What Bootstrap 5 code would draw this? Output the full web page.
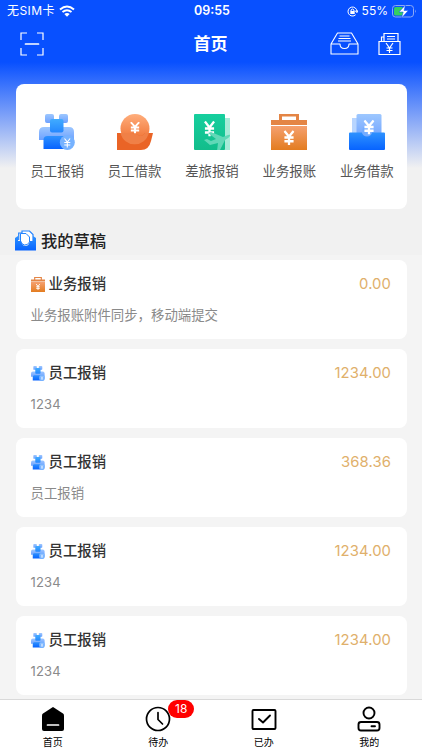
<!DOCTYPE html>
<html lang="zh-CN">
<head>
<meta charset="utf-8">
<meta name="viewport" content="width=device-width, initial-scale=1">
<title>首页</title>
<link href="https://cdn.jsdelivr.net/npm/bootstrap@5.3.0/dist/css/bootstrap.min.css" rel="stylesheet">
<style>
body{font-family:Inter,"Noto Sans CJK SC",sans-serif;background:#f4f4f4;color:#333}
svg{display:block;flex:none}
.screen{height:750px}
.hero{height:255px;background:linear-gradient(#0850ff 0,#0850ff 62px,#f1f1f1 168px)}
.status{height:20px;font-size:12px;line-height:20px;padding:2px 5px 0 7px}
.carrier{letter-spacing:.45px}
.side{width:150px}
.clock{font-size:12.5px;font-weight:600}
.topbar{height:44px;padding:3px 21px 0 20px}
.topbar h1{font-size:17px;line-height:24px}
.nav-side{width:71px}
.nav-actions{gap:19px}
.panel{margin:19.5px 15.5px 0;height:125.5px;border-radius:8px;padding:30px 1px 0 3px}
.app-label{font-size:13.4px;line-height:20px;color:#555;margin-top:11px}
.drafts-title{height:46px;padding:17px 15px 0;gap:5px}
.drafts-title h2{font-size:16.3px;line-height:24px;font-weight:500;color:#222}
.drafts{padding:5px 15.5px 0;gap:10px}
.draft{height:79px;flex:none;border-radius:8px;padding:14px 15.5px 0 15px}
.draft-name{font-size:14.4px;line-height:20px;font-weight:500;color:#333}
.amount{font-size:14.8px;line-height:20px;color:#dfb06b;letter-spacing:.1px}
.note{font-size:13.4px;line-height:20px;color:#8a8a8a;margin-top:11px}
.note-number{font-size:13px;letter-spacing:.2px}
.tabs{height:51px;border-top:1px solid #d9d9d9;padding-top:6px}
.tab-label{font-size:10px;line-height:14px;margin-top:3px;font-weight:400}
.count{left:23px;top:-6px;width:26px;height:18px;line-height:18px;font-size:12px;background:#f00}
</style>
<script src="https://cdn.jsdelivr.net/npm/bootstrap@5.3.0/dist/js/bootstrap.bundle.min.js"></script>
</head>
<body>
<svg width="0" height="0" class="position-absolute" aria-hidden="true">
<defs>
<linearGradient id="sky" x2="0" y2="1"><stop stop-color="#41acff"/><stop offset="1" stop-color="#2487ff"/></linearGradient>
<linearGradient id="blue" x2="0" y2="1"><stop stop-color="#2e92ff"/><stop offset="1" stop-color="#0763ff"/></linearGradient>
<linearGradient id="pale" x2="0" y2="1"><stop stop-color="#9dc7ff"/><stop offset="1" stop-color="#6da1ff"/></linearGradient>
<linearGradient id="coin" x2="0" y2="1"><stop stop-color="#ffae7c"/><stop offset="1" stop-color="#ee6c2c"/></linearGradient>
<linearGradient id="bag" x2="0" y2="1"><stop stop-color="#f5a06f"/><stop offset="1" stop-color="#e37c20"/></linearGradient>
<linearGradient id="green" x2="0" y2="1"><stop stop-color="#16cf9e"/><stop offset="1" stop-color="#12bd8b"/></linearGradient>
<symbol id="yen" viewBox="0 0 12 16" preserveAspectRatio="none"><path d="M1 1l5 6 5-6M6 6v10M1 8h10M1 12h10" fill="none" stroke="currentColor" stroke-width="2.500"/></symbol>
<symbol id="staff" viewBox="0 0 36 36">
<rect x="6" y="0" width="9" height="9" rx="2" fill="url(#pale)"/><rect x="20" y="0" width="9" height="9" rx="2" fill="url(#pale)"/>
<path d="M0 26V18q0-5 5-5h25q5 0 5 5v8z" fill="url(#pale)"/>
<rect x="11" y="5" width="13.500" height="13.500" rx="2" fill="url(#sky)"/>
<path d="M4.500 35V26q0-4 4-4H30v13z" fill="url(#blue)"/>
<circle cx="28.300" cy="28.500" r="7.500" fill="#76b2ff"/>
<path d="M25.500 24.500l2.800 3.500 2.800-3.500M28.300 28v5.500M25.300 28.500h6M25.300 31h6" fill="none" stroke="currentColor" stroke-width="1.100"/></symbol>
<symbol id="business" viewBox="0 0 36 36"><path d="M8 6V0h20v6h8v5H0V6zm3 0h14V2.500H11z" fill="#e48545" fill-rule="evenodd"/><path d="M0 12h36v24H0z" fill="url(#bag)"/><use href="#yen" x="12.500" y="16" width="11" height="15"/></symbol>
</defs></svg>

<main class="screen d-flex flex-column overflow-hidden">
<header class="hero flex-shrink-0 text-white">
  <div class="status d-flex justify-content-between align-items-center">
    <div class="side d-flex align-items-center"><span class="carrier me-1">无SIM卡</span>
      <svg width="16" height="12" viewBox="0 0 16 12" fill="none" stroke="#fff" stroke-width="2"><path d="M1 4.500q7-6 14 0M3.500 7q4.500-3.500 9 0"/><path d="M5.300 9q2.700-2 5.400 0L8 11.700z" fill="#fff" stroke="none"/></svg></div>
    <span class="clock">09:55</span>
    <div class="side d-flex align-items-center justify-content-end">
      <svg class="me-1" width="11" height="11" viewBox="0 0 11 11" fill="none" stroke="#fff"><path d="M8.700 8.700A4.500 4.500 0 1 1 10 5.500M8.500 5h2.500L9.900 6.700z"/><path d="M4 5V4q1.500-2 3 0v1"/><path d="M3.300 5h4.400v3H3.300z" fill="#fff" stroke="none"/></svg>
      <span>55%</span>
      <svg class="ms-1" width="25" height="13" viewBox="0 0 25 13"><rect x=".5" y=".5" width="21" height="11.500" rx="3" fill="none" stroke="#8ba8f5"/><rect x="2" y="2" width="9" height="8.500" rx="1.500" fill="#35cf60"/><path d="M23 4.500q1.800 1.800 0 3.600z" fill="#8ba8f5"/><path d="M13.500 0L7 7h4.200L9.500 13l6.800-7.500H12z" fill="#fff" stroke="#0850ff" stroke-width=".5"/></svg>
    </div>
  </div>
  <nav class="topbar d-flex justify-content-between align-items-center">
    <div class="nav-side"><svg width="24" height="24" viewBox="0 0 24 24" fill="none" stroke="#fff"><path d="M1 8V1h6M17 1h6v7M1 16v7h6M17 23h6v-7" stroke-width="1.200"/><path d="M5.500 12h13" stroke-width="1.700" stroke-linecap="round"/></svg></div>
    <h1 class="m-0 fw-bold">首页</h1>
    <div class="nav-actions d-flex justify-content-end">
      <svg width="29" height="24" viewBox="0 0 29 24" fill="none" stroke="#fff" stroke-width="1.100" stroke-linejoin="round"><path d="M1 12L7.500 1h14L28 12v10H1zM1 12h9q0 4.500 4.500 4.500T19 12h9M9.500 4h10M8.500 6.500h12M8 9h13"/></svg>
      <svg width="23" height="24" viewBox="0 0 23 24" fill="none" stroke="#fff" stroke-width="1.200"><path d="M1 9.500h21v13H1zM3.500 9.500V5H6M6 9.500V1.500h14v8M9 4.500h8M9 7h8"/><path d="M8 11l3.500 5 3.500-5M11.500 15.500V21M8.500 16h6M8.500 18.500h6"/></svg>
    </div>
  </nav>
  <section class="panel bg-white">
    <div class="row g-0 row-cols-5 text-center">
      <div class="col d-flex flex-column align-items-center text-white"><svg width="36" height="36"><use href="#staff"/></svg><span class="app-label">员工报销</span></div>
      <div class="col d-flex flex-column align-items-center text-white"><svg width="36" height="36" viewBox="0 0 36 36"><circle cx="18" cy="14.500" r="14.500" fill="url(#coin)"/><path d="M0 19h14q5 0 7 2 3 2 5 0l2-2h8l-2 8q-2 9-10 9H0z" fill="#ea6426"/><path d="M3.500 19H14q5 0 7 2 3 2 5 0l2-2h3.800A14.500 14.500 0 0 1 3.500 19z" fill="#f08047"/><use href="#yen" x="13" y="7.500" width="10" height="12"/></svg><span class="app-label">员工借款</span></div>
      <div class="col d-flex flex-column align-items-center text-white"><svg width="36" height="36" viewBox="0 0 36 36"><path d="M28 4h8v32H16z" fill="#a6ebd8"/><rect width="31" height="36" rx="1" fill="url(#green)"/><use href="#yen" x="10" y="6.500" width="11" height="16"/><path d="M10 25l3-1 4 2 5-2-8-6 3-1 12 5 5-2q3-1 2 1-1 2-5 4l-5 10-3 1 1-8-8 2z" fill="#61d8b7" transform="translate(0 1)"/></svg><span class="app-label">差旅报销</span></div>
      <div class="col d-flex flex-column align-items-center text-white"><svg width="36" height="36"><use href="#business"/></svg><span class="app-label">业务报账</span></div>
      <div class="col d-flex flex-column align-items-center text-white"><svg width="36" height="36" viewBox="0 0 36 36"><path d="M3 4h18v20H3z" fill="#b8d5ff"/><rect x="7.500" width="25" height="26" rx="1.500" fill="url(#pale)"/><path d="M1 18.500h12q1 4 5 4t5-4h12q1 0 1 1V35q0 1-1 1H1q-1 0-1-1V19.500q0-1 1-1z" fill="url(#blue)"/><circle cx="18" cy="17" r="5" fill="#75adff"/><use href="#yen" x="14.500" y="5.500" width="11" height="15"/></svg><span class="app-label">业务借款</span></div>
    </div>
  </section>
  <div class="drafts-title d-flex align-items-center">
    <svg width="21" height="21" viewBox="0 0 21 21"><path d="M3.700 10V3h4" fill="none" stroke="#2484ff" stroke-width="1.200"/><path d="M7 4V1h7.500L18 4.500V12h-3" fill="#fff" stroke="#2484ff" stroke-width="1.200"/><path d="M5.500 3.500H11l3.500 3.500v5q-2 3.500-5 3-3-.5-4-4z" fill="#fff" stroke="#2484ff" stroke-width="1"/><path d="M0 8l3-2v5h3q1 5 4.500 5t4.500-5h3V6l3 2v12.500H0z" fill="url(#blue)"/></svg>
    <h2 class="m-0">我的草稿</h2>
  </div>
</header>
<section class="drafts flex-fill d-flex flex-column overflow-hidden">
  <article class="draft bg-white"><div class="d-flex align-items-center"><svg class="text-white me-1" width="14" height="15" viewBox="0 0 36 36" preserveAspectRatio="none"><use href="#business" width="36" height="36"/></svg><span class="draft-name">业务报销</span><span class="amount ms-auto">0.00</span></div><div class="note">业务报账附件同步，移动端提交</div></article>
  <article class="draft bg-white"><div class="d-flex align-items-center"><svg class="text-white me-1" width="14" height="15" viewBox="0 0 36 36" preserveAspectRatio="none"><use href="#staff" width="36" height="36"/></svg><span class="draft-name">员工报销</span><span class="amount ms-auto">1234.00</span></div><div class="note note-number">1234</div></article>
  <article class="draft bg-white"><div class="d-flex align-items-center"><svg class="text-white me-1" width="14" height="15" viewBox="0 0 36 36" preserveAspectRatio="none"><use href="#staff" width="36" height="36"/></svg><span class="draft-name">员工报销</span><span class="amount ms-auto">368.36</span></div><div class="note">员工报销</div></article>
  <article class="draft bg-white"><div class="d-flex align-items-center"><svg class="text-white me-1" width="14" height="15" viewBox="0 0 36 36" preserveAspectRatio="none"><use href="#staff" width="36" height="36"/></svg><span class="draft-name">员工报销</span><span class="amount ms-auto">1234.00</span></div><div class="note note-number">1234</div></article>
  <article class="draft bg-white"><div class="d-flex align-items-center"><svg class="text-white me-1" width="14" height="15" viewBox="0 0 36 36" preserveAspectRatio="none"><use href="#staff" width="36" height="36"/></svg><span class="draft-name">员工报销</span><span class="amount ms-auto">1234.00</span></div><div class="note note-number">1234</div></article>
</section>
<footer class="tabs bg-white flex-shrink-0 text-black">
  <div class="row g-0 row-cols-4">
    <div class="col d-flex flex-column align-items-center"><svg width="26" height="26" viewBox="0 0 26 26"><path d="M13 1l10 6.500q1 .7 1 2V23q0 2-2 2H4q-2 0-2-2V9.500q0-1.300 1-2z"/><path d="M7.500 19h11" stroke="#fff" stroke-width="1.700" stroke-linecap="round"/></svg><span class="tab-label">首页</span></div>
    <div class="col d-flex flex-column align-items-center"><div class="position-relative"><svg width="26" height="26" viewBox="0 0 26 26" fill="none" stroke="#000" stroke-width="1.700" stroke-linecap="round"><circle cx="13" cy="13" r="11.500"/><path d="M13 6.500v7l4.500 4.500"/></svg><span class="count position-absolute rounded-pill text-white text-center">18</span></div><span class="tab-label">待办</span></div>
    <div class="col d-flex flex-column align-items-center"><svg width="26" height="26" viewBox="0 0 26 26" fill="none" stroke="#000" stroke-width="1.900" stroke-linecap="round" stroke-linejoin="round"><rect x="1.500" y="4" width="23" height="19" rx="1"/><path d="M8 13l4 3.500 7-7"/></svg><span class="tab-label">已办</span></div>
    <div class="col d-flex flex-column align-items-center"><svg width="26" height="26" viewBox="0 0 26 26" fill="none" stroke="#000" stroke-width="1.900" stroke-linecap="round"><circle cx="13" cy="7" r="5.500"/><rect x="2.500" y="16" width="21" height="8.500" rx="2.500"/><path d="M15.500 20.300h3.500"/></svg><span class="tab-label">我的</span></div>
  </div>
</footer>
</main>
</body>
</html>
